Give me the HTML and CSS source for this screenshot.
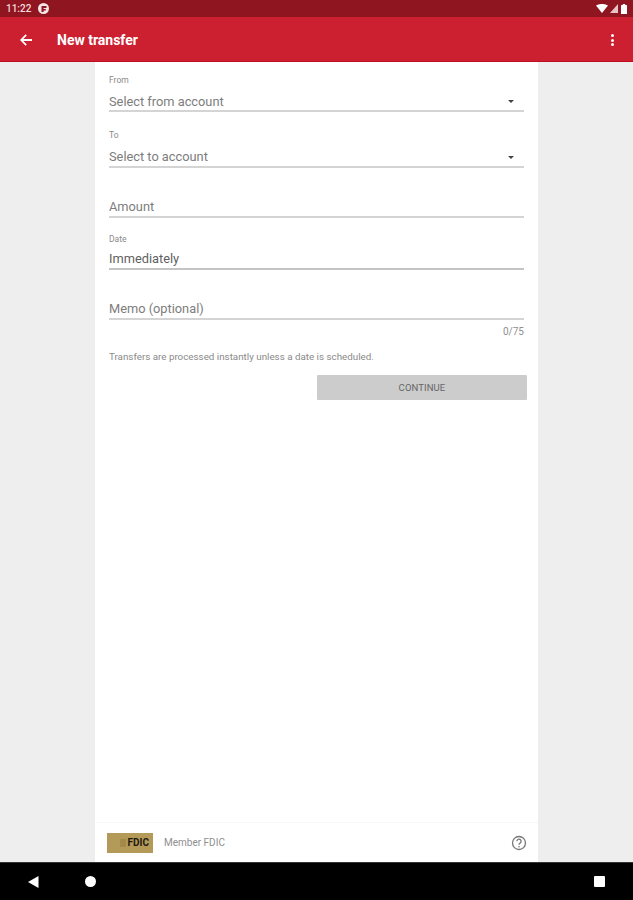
FILE: index.html
```html
<!DOCTYPE html>
<html lang="en">
<head>
    <meta charset="UTF-8">
    <meta name="viewport" content="width=device-width, initial-scale=1.0">
    <title>New transfer</title>
    <link rel="stylesheet" href="styles.css">
</head>
<body>

    <!-- Status bar -->
    <div class="status-bar">
        <div class="status-left">
            <span class="clock">11:22</span>
            <span class="notif-dot">
                <svg width="8" height="8" viewBox="0 0 8 8"><path d="M1.500 1h5v2H3.600v1h2.200v1.600H3.600V7H1.500z" fill="#8f1521"/></svg>
            </span>
        </div>
        <div class="status-right">
            <svg class="wifi" width="12" height="9" viewBox="0 0 12 9"><path d="M0 1.600C3.400-.6 8.600-.6 12 1.600L6 9z" fill="#fff"/></svg>
            <svg class="signal" width="8" height="9" viewBox="0 0 8 9"><path d="M8 0v9H0z" fill="#e9c4c7"/></svg>
            <svg class="battery" width="6" height="10" viewBox="0 0 6 10"><path d="M1.800 0h2.400v1h1.300a.5.500 0 0 1 .5.500V10H0V1.500A.5.500 0 0 1 .5 1h1.300z" fill="#fff"/></svg>
        </div>
    </div>

    <!-- App bar -->
    <header class="app-bar">
        <svg class="back" width="14" height="14" viewBox="0 0 14 14"><path d="M13 6H4.300l3.500-3.600L6.600 1.200 1 7l5.600 5.800 1.200-1.200L4.300 8H13z" fill="#fff"/></svg>
        <h1>New transfer</h1>
        <div class="overflow"><i></i><i></i><i></i></div>
    </header>

    <div class="content">
        <main class="panel">
            <form class="form">
                <div class="field field-from">
                    <label>From</label>
                    <div class="value select"><span>Select from account</span><b class="caret"></b></div>
                </div>
                <div class="field field-to">
                    <label>To</label>
                    <div class="value select"><span>Select to account</span><b class="caret"></b></div>
                </div>
                <div class="field field-amount">
                    <div class="value"><span>Amount</span></div>
                </div>
                <div class="field field-date">
                    <label>Date</label>
                    <div class="value filled"><span>Immediately</span></div>
                </div>
                <div class="field field-memo">
                    <div class="value"><span>Memo (optional)</span></div>
                </div>
                <div class="counter">0/75</div>
                <p class="help">Transfers are processed instantly unless a date is scheduled.</p>
                <div class="actions">
                    <button type="button" class="btn-continue">CONTINUE</button>
                </div>
            </form>

            <footer class="panel-footer">
                <div class="fdic-badge"><span class="seal"></span><span>FDIC</span></div>
                <span class="member">Member FDIC</span>
                <svg class="help-icon" width="16" height="16" viewBox="0 0 16 16">
                    <circle cx="8" cy="8" r="6.500" fill="none" stroke="#777" stroke-width="1.300"/>
                    <path d="M5.900 6.300a2.100 2.100 0 1 1 3.300 1.700c-.7.500-1.200.9-1.200 1.800" fill="none" stroke="#777" stroke-width="1.300"/>
                    <circle cx="8" cy="11.700" r=".8" fill="#777"/>
                </svg>
            </footer>
        </main>
    </div>

    <!-- Nav bar -->
    <nav class="nav-bar">
        <svg class="nav-back" width="11" height="12" viewBox="0 0 11 12"><path d="M10.500 0v12L0 6z" fill="#fff"/></svg>
        <span class="nav-home"></span>
        <span class="nav-recent"></span>
    </nav>

</body>
</html>
```

FILE: styles.css
```css
* {
    box-sizing: border-box;
}

body {
    margin: 0;
    width: 633px;
    height: 900px;
    display: flex;
    flex-direction: column;
    font-family: Roboto, sans-serif;
    background: #eeeeee;
    overflow: hidden;
}

/* Status bar */
.status-bar {
    height: 17px;
    background: #8f1521;
    display: flex;
    justify-content: space-between;
    align-items: center;
    padding: 0 6px 0 6px;
}

.status-left {
    display: flex;
    align-items: center;
    gap: 7px;
}

.clock {
    color: #f3dcde;
    font-size: 10px;
    font-weight: 500;
}

.notif-dot {
    width: 11px;
    height: 11px;
    border-radius: 50%;
    background: #f4e6e7;
    display: flex;
    align-items: center;
    justify-content: center;
}

.status-right {
    display: flex;
    align-items: center;
}

.signal {
    margin-left: 2px;
}

.battery {
    margin-left: 3px;
}

/* App bar */
.app-bar {
    height: 45px;
    background: #cc1f2f;
    border-bottom: 1px solid #c00f1e;
    display: flex;
    align-items: center;
    padding: 2px 19px 0 19px;
}

.app-bar h1 {
    margin: 0 0 0 24px;
    flex: 1;
    color: white;
    font-size: 14px;
    font-weight: 700;
}

.overflow {
    display: flex;
    flex-direction: column;
    gap: 1.500px;
}

.overflow i {
    width: 3px;
    height: 3px;
    border-radius: 50%;
    background: #fff;
}

/* Middle */
.content {
    flex: 1;
    display: flex;
    justify-content: center;
    min-height: 0;
}

.panel {
    width: 443px;
    background: #ffffff;
    display: flex;
    flex-direction: column;
}

.form {
    flex: 1;
    padding: 12px 14px 0 14px;
}

.field label {
    display: block;
    height: 12px;
    line-height: 12px;
    font-size: 8.500px;
    color: #8a8a8a;
}

.value {
    height: 20px;
    line-height: 18px;
    font-size: 12.800px;
    color: #7d7d7d;
    border-bottom: 2px solid #d4d4d4;
    display: flex;
    justify-content: space-between;
    align-items: flex-start;
}

.value.filled {
    color: #5f5f5f;
    border-bottom-color: #c4c4c4;
}

.select {
    padding-right: 10px;
}

.caret {
    width: 0;
    height: 0;
    margin-top: 8px;
    border-left: 3.500px solid transparent;
    border-right: 3.500px solid transparent;
    border-top: 3.500px solid #444;
}

.field-from label + .value {
    margin-top: 6px;
    line-height: 19px;
}

.field-to {
    margin-top: 17px;
}

.field-to label + .value {
    margin-top: 7px;
}

.field-amount {
    margin-top: 30px;
}

.field-date {
    margin-top: 15px;
}

.field-date label + .value {
    margin-top: 5px;
}

.field-memo {
    margin-top: 30px;
}

.counter {
    margin-top: 6px;
    height: 12px;
    line-height: 12px;
    text-align: right;
    font-size: 10px;
    color: #8f8f8f;
}

.help {
    margin: 13px 0 0;
    height: 12px;
    line-height: 12px;
    font-size: 9.800px;
    color: #8a8a8a;
}

.actions {
    margin-top: 12px;
    margin-right: -3px;
    display: flex;
    justify-content: flex-end;
}

.btn-continue {
    width: 210px;
    height: 25px;
    border: none;
    border-radius: 1px;
    background: #cccccc;
    color: #666666;
    font-family: Roboto, sans-serif;
    font-size: 9.500px;
    font-weight: 400;
    letter-spacing: 0.1px;
    padding: 0;
}

/* Footer */
.panel-footer {
    height: 40px;
    border-top: 1px solid #f7f7f7;
    display: flex;
    align-items: center;
    padding: 0 11px 0 12px;
}

.fdic-badge {
    width: 46px;
    height: 20px;
    background: #b49a58;
    display: flex;
    align-items: center;
    justify-content: flex-end;
    gap: 2px;
    padding-right: 4px;
    font-size: 10px;
    font-weight: 700;
    color: #1f1a10;
}

.seal {
    width: 6px;
    height: 8px;
    background: #a38a4c;
}

.member {
    margin-left: 11px;
    flex: 1;
    font-size: 10px;
    color: #8f8f8f;
}

/* Nav bar */
.nav-bar {
    position: relative;
    height: 38px;
    background: #000;
    border-top: 1px solid #333;
}

.nav-back {
    position: absolute;
    left: 28px;
    top: 13px;
}

.nav-home {
    position: absolute;
    left: 85px;
    top: 13px;
    width: 11px;
    height: 11px;
    border-radius: 50%;
    background: #fff;
}

.nav-recent {
    position: absolute;
    left: 594px;
    top: 13px;
    width: 11px;
    height: 11px;
    border-radius: 1px;
    background: #fff;
}
```
